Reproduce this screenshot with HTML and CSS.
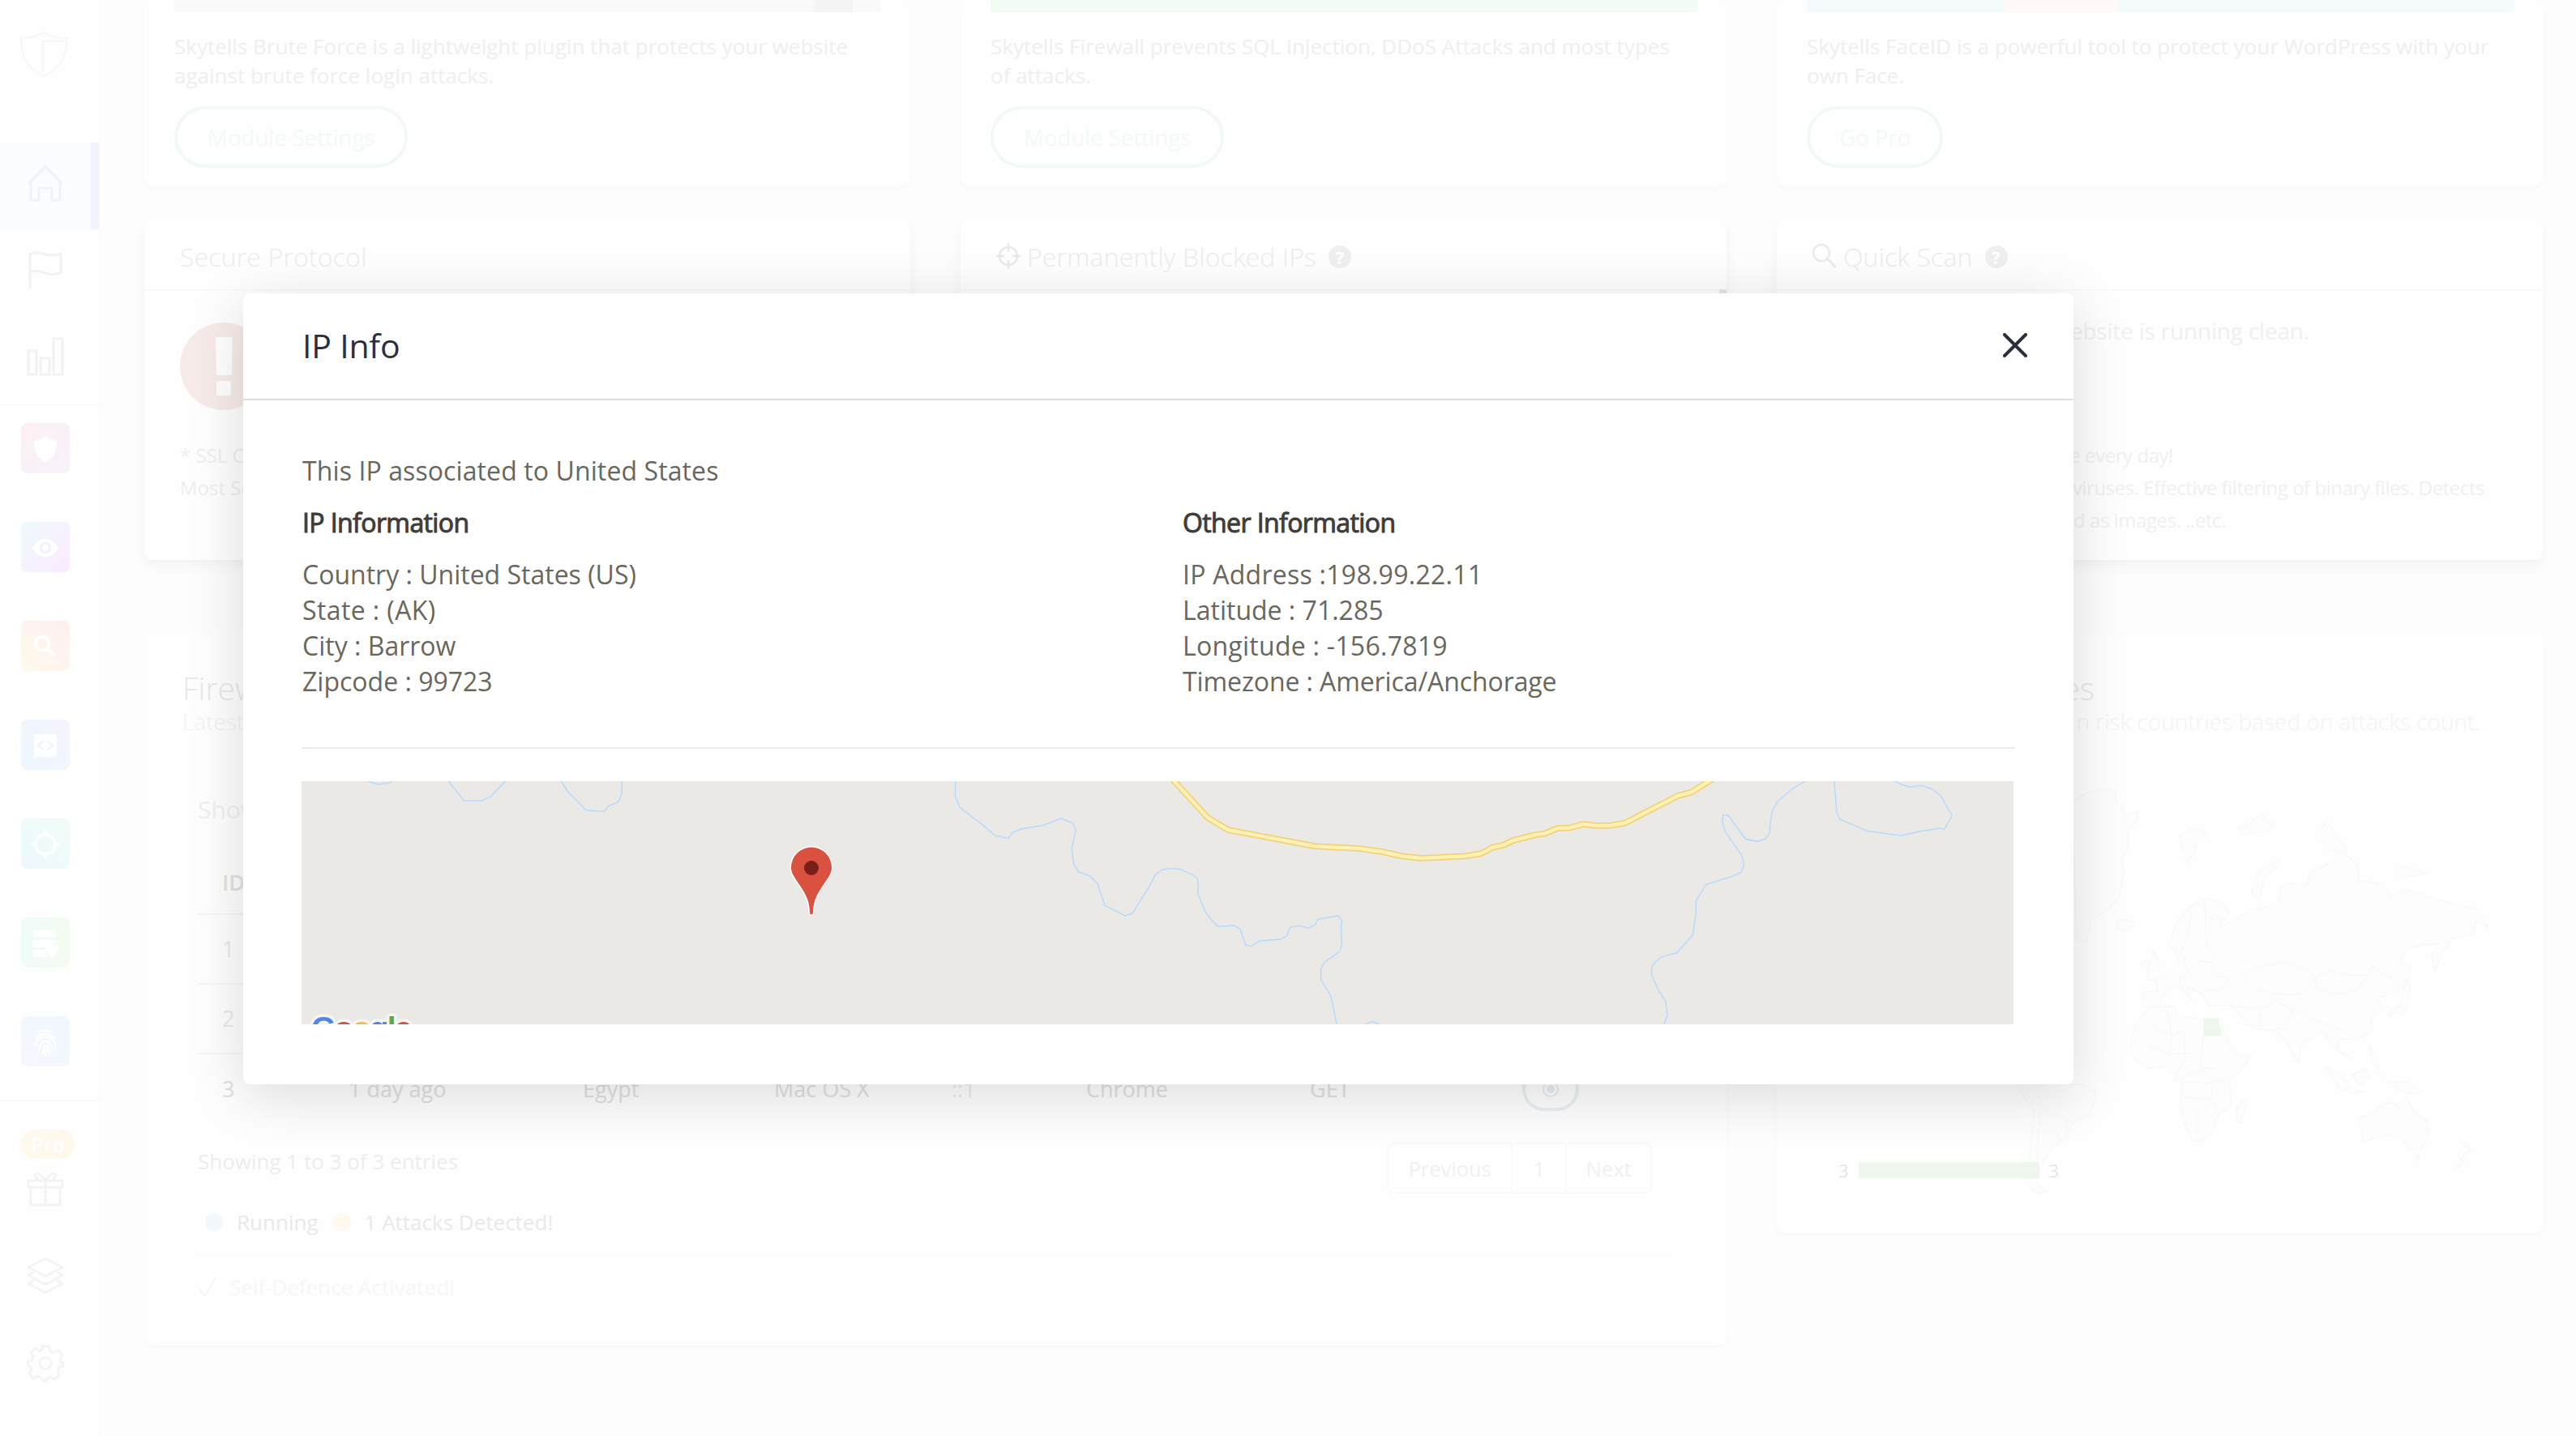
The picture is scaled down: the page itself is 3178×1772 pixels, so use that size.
FILE: index.html
```
<!DOCTYPE html>
<html lang="en">
<head>
<meta charset="utf-8">
<title>IP Info</title>
<link rel="stylesheet" href="styles.css">
</head>
<body>
<div class="app">
  <nav class="sidebar">
    <div class="brand">
      <svg width="60" height="58" viewBox="0 0 60 58" fill="none" stroke="#f3f8f9" stroke-width="2"><path d="M30 2C22 8 12 9 2 9c-1 22 8 38 28 47C50 47 59 31 58 9 48 9 38 8 30 2z"/><path d="M29 50V13h27"/></svg>
    </div>
    <div class="nav-item active">
      <svg width="46" height="46" viewBox="0 0 46 46" fill="none" stroke="#f0f1fc" stroke-width="3" stroke-linejoin="round"><path d="M2 24 23 2l21 22M5 21v23h10V29h16v15h10V21"/></svg>
    </div>
    <div class="nav-item">
      <svg width="46" height="48" viewBox="0 0 46 48" fill="none" stroke="#f2f2f2" stroke-width="3"><path d="M4 47V5c12-7 22 6 38-1v23c-16 8-24-6-38 0"/></svg>
    </div>
    <div class="nav-item">
      <svg width="46" height="48" viewBox="0 0 46 48" fill="none" stroke="#f2f2f2" stroke-width="3" stroke-linejoin="round"><path d="M2 17h10v29H2zM17 26h11v20H17zM33 2h11v44H33z"/></svg>
    </div>
    <div class="tiles">
      <div class="tile t1"><svg viewBox="0 0 60 62" fill="#fff"><path d="M30 16c5 4 9 5 14 6 1 12-4 21-14 27-10-6-15-15-14-27 5-1 9-2 14-6z"/></svg></div>
      <div class="tile t2"><svg viewBox="0 0 60 62"><path fill="#fff" d="M14 32c7-15 25-15 32 0-7 15-25 15-32 0z"/><circle cx="30" cy="32" r="5.500" fill="#fff" stroke="#f2f2fe" stroke-width="3.500"/></svg></div>
      <div class="tile t3"><svg viewBox="0 0 60 62" fill="none" stroke="#fff" stroke-width="4"><circle cx="26" cy="28" r="8.500"/><path d="m32 34 9 9"/></svg></div>
      <div class="tile t4"><svg viewBox="0 0 60 62"><rect x="16" y="18" width="28" height="28" rx="2" fill="#fff"/><path d="m27 26-6 6 6 6m6-12 6 6-6 6" fill="none" stroke="#f0f6fe" stroke-width="3"/></svg></div>
      <div class="tile t5"><svg viewBox="0 0 60 62" fill="none" stroke="#fff" stroke-width="3.500"><circle cx="30" cy="32" r="12"/><path d="M30 15v6m0 22v6M13 32h6m22 0h6"/></svg></div>
      <div class="tile t6"><svg viewBox="0 0 60 62" fill="#fff"><path d="M15 16h28v8H15zM15 28h28v3c-7 1-10 3-12 6H15zM15 40h15c0 4 1 7 3 9H15z"/><path d="m38 33 8 3c0 7-3 11-8 14-5-3-8-7-8-14z"/></svg></div>
      <div class="tile t7"><svg viewBox="0 0 60 62" fill="none" stroke="#fff" stroke-width="2.300" stroke-linecap="round"><path d="M21 20q9-5 18 0M18 27q12-11 24 0M18 36c0-14 24-14 24 0v3M22 42c3-5 0-10 7-11 8-1 8 6 9 12M26 46c4-5 1-10 5-10 4 1 1 6 4 10M31 41l-1 7"/></svg></div>
    </div>
    <div class="nav-foot">
      <span class="pro">Pro</span>
      <svg width="46" height="44" viewBox="0 0 46 44" fill="none" stroke="#f3f3f3" stroke-width="3"><path d="M2 12h42v8H2zM5 20h36v22H5zM23 12v30M23 11C12-2 6 4 14 11M23 11C34-2 40 4 32 11"/></svg>
      <svg class="layers" width="46" height="48" viewBox="0 0 46 48" fill="none" stroke="#f4f4f4" stroke-width="3" stroke-linejoin="round"><path d="M23 3 44 14 23 25 2 14zM8 20l-6 4 21 11 21-11-6-4M8 30l-6 4 21 11 21-11-6-4"/></svg>
      <svg class="gear" width="46" height="46" viewBox="0 0 46 46" fill="none" stroke="#f4f4f4" stroke-width="3" stroke-linejoin="round"><circle cx="23" cy="23" r="7"/><path d="M19 2h8l2 6 4 2 6-3 5 6-3 5 1 4 3 1v3l-5 2-2 4 2 6-6 5-5-3-4 2-1 3h-4l-2-4-4-2-6 3-5-6 3-5-2-4-3-1v-4l5-2 2-4-3-6 6-5 5 3 4-2z"/></svg>
    </div>
  </nav>

  <main class="board">
    <section class="card module">
      <div class="banner grey"></div>
      <p>Skytells Brute Force is a lightweight plugin that protects your website<br>against brute force login attacks.</p>
      <span class="btn wide">Module Settings</span>
    </section>
    <section class="card module">
      <div class="banner green"></div>
      <p>Skytells Firewall prevents SQL Injection, DDoS Attacks and most types<br>of attacks.</p>
      <span class="btn wide">Module Settings</span>
    </section>
    <section class="card module">
      <div class="banner blue"></div>
      <p>Skytells FaceID is a powerful tool to protect your WordPress with your<br>own Face.</p>
      <span class="btn small">Go Pro</span>
    </section>

    <section class="card panel">
      <header>Secure Protocol</header>
      <svg class="alert" width="108" height="108" viewBox="0 0 108 108"><circle cx="54" cy="54" r="54" fill="#f7ebe9"/><path d="M44 20q0-2 2-2h17q2 0 2 2l-1 43q0 2-2 2H47q-2 0-2-2zM45 74q0-2 2-2h14q2 0 2 2v14q0 2-2 2H47q-2 0-2-2z" fill="#fff"/></svg>
      <div class="notes"><p>* SSL C</p><p>Most Se</p></div>
    </section>
    <section class="card panel">
      <header>
        <svg class="ic" width="32" height="34" viewBox="0 0 32 34" fill="none" stroke="#e9e9e9" stroke-width="2.500"><circle cx="15" cy="16" r="11"/><path d="M15 0v11m0 10v11M0 16h10m10 0h10"/></svg>
        Permanently Blocked IPs <i class="help">?</i>
      </header>
      <div class="nub"></div>
    </section>
    <section class="card panel">
      <header>
        <svg class="ic" width="32" height="34" viewBox="0 0 32 34" fill="none" stroke="#ebebeb" stroke-width="2.500"><circle cx="11" cy="12" r="10"/><path d="m18 19 11 11" stroke-width="3"/></svg>
        Quick Scan <i class="help">?</i>
      </header>
      <p class="tail scan">website is running clean.</p>
      <p class="tail l1">e every day!</p>
      <p class="tail l2">viruses. Effective filtering of binary files. Detects</p>
      <p class="tail l3">d as images. ..etc.</p>
    </section>

    <section class="card firewall">
      <h2>Firew</h2>
      <h3>Latest</h3>
      <div class="log">
        <p class="show">Show</p>
        <div class="row head"><span>ID</span></div>
        <div class="row"><span>1</span></div>
        <div class="row"><span>2</span></div>
        <div class="row last">
          <span>3</span><span>1 day ago</span><span>Egypt</span><span>Mac OS X</span><span class="ip">::1</span><span>Chrome</span><span>GET</span>
          <span class="eye"><svg width="24" height="24" viewBox="0 0 24 24"><circle cx="12" cy="12" r="9" fill="none" stroke="#e6edf1" stroke-width="2"/><circle cx="12" cy="12" r="5" fill="#e6edf1"/></svg></span>
        </div>
        <div class="foot">
          <p>Showing 1 to 3 of 3 entries</p>
          <div class="pager"><span class="prev">Previous</span><span class="num">1</span><span class="next">Next</span></div>
        </div>
        <p class="status"><i class="dot cyan"></i><span class="run">Running</span><i class="dot amber"></i><span>1 Attacks Detected!</span></p>
        <p class="defence"><svg width="24" height="26" viewBox="0 0 24 26" fill="none" stroke="#f6f6f6" stroke-width="2"><path d="m2 16 7 8L22 1"/></svg>Self-Defence Activated!</p>
      </div>
    </section>

    <section class="card countries">
      <h2>es</h2>
      <h3>n risk countries based on attacks count.</h3>
      <svg class="world" viewBox="500 460 950 940" preserveAspectRatio="none" fill="#fdfdfd" stroke="#f9f9f9" stroke-width="2.500" stroke-linejoin="round">
        <path d="M620 500l25-20 30-12 30 6-5 20 14 14 6 20 26-8-4 20-16 26 0 40-12 20 4 30-8 60-24 30-30 20-8 50-18 2z"/>
        <path d="M704 770l16-4 20 6-8 14-16 6-10-10z"/>
        <path d="M822 574l20-14 26 2 4 14-16 10-6 30-12 20-10-30zM932 556l20-6 26-26 8 20 16 4-14 16-26 4-20 4zM958 705l14-50 38-24 2 8-28 30-12 50zM1086 570l14-32 14 30 24 36-6 16-30-12zM1232 650l20-6 34 16-20 6-30 2z"/>
        <path d="M764 880l10-46 8 24 10 40-30 6zM750 862l14-6 0 16-12 6z"/>
        <path d="M802 826 816 776 842 736 874 716 904 728 918 752 902 772 890 752 884 762 904 782 932 762 952 746 990 735 1008 728 1014 688 1040 682 1062 690 1070 656 1110 634 1128 610 1140 622 1158 640 1160 676 1204 684 1218 712 1248 696 1310 722 1350 732 1385 742 1404 784 1380 768 1376 800 1336 808 1318 840 1303 884 1298 850 1310 820 1280 824 1252 830 1238 862 1258 868 1252 910 1226 932 1196 944 1206 966 1184 984 1186 1020 1160 1036 1124 1038 1118 1060 1146 1080 1128 1072 1110 1052 1090 1020 1052 1050 1046 1092 1024 1044 1004 1018 960 1014 938 986 920 960 878 962 866 934 838 920 846 948 820 918 790 936 784 964 754 964 754 930 782 928 778 902 808 880 822 858 814 834z"/>
        <path d="M858 860l30 4-4 26 30 10-10 24-40 4M940 890l46-20 30-8 50 20 12 12-20 40-40 2-50-10zM1078 896l26-14 40 10 34 0-20 30-40 14-40-16zM1178 890l10-20 20 20 26 18M924 962l50 6 0 40-30-4M976 968l30-18 30 24-12 34-26 10M1040 970l30 20 60 30M830 850l10 40-20 10 10 30M846 750l-10 60-16 40M870 724l4 100 20 30" fill="none"/>
        <path d="M766 966 812 962 822 984 868 992 900 990 916 1050 934 1074 958 1074 938 1110 918 1134 920 1188 894 1212 886 1246 868 1268 848 1270 836 1240 824 1190 828 1146 816 1116 790 1100 764 1104 740 1086 730 1058 738 1006z"/>
        <path d="M766 1000l40 30 40-20M800 975l10 60-6 40M738 1040l60 30 50 0M832 1024v60l-20 50 60-30M868 1031l-6 70 40 6M828 1134l60 4 30-14M830 1170l56 4 10 44M856 1190v60M888 1130l-10 60" fill="none"/>
        <path d="M932 1224l-4-26 18-26 4 10-12 46zM1098 1100l30 20 14 30 30 6-20 4-30-10zM1148 1120l24-16 10 16-20 24zM1180 1050l10 20 10 40-14-20zM1210 1134l40 0 30 24-30 4zM1216 978l20-16 14-60 8 20-10 50-30 12z"/>
        <path d="M1170 1272 1160 1218 1190 1202 1206 1184 1222 1180 1236 1194 1248 1166 1266 1206 1288 1222 1292 1256 1276 1292 1254 1284 1240 1264 1216 1256 1190 1262zM1266 1300l8-2-2 16zM1344 1328l14-30 14-14-16 36-10 12zM1352 1270l8 14 8-2z"/>
        <path d="M516 1140h120l30 16-2 24-10 30-30 16-20 40-24 24-18 40-10 30 22 24-20 4-16-20 4-80 8-90-16-20z"/>
        <path d="M552 1160l20 40 40 20 0 50M560 1200l-6 140M590 1240l10 30" fill="none"/>
        <path d="M868 990h28l8 40h-36z" fill="#eff6ed" stroke="none"/>
      </svg>
      <div class="legend"><span>3</span><i></i><span>3</span></div>
    </section>
  </main>
</div>

<div class="modal">
  <header class="modal-head">
    <h1>IP Info</h1>
    <svg width="30" height="30" viewBox="0 0 30 30" stroke="#2c2e3e" stroke-width="4" stroke-linecap="round"><path d="m2 2 26 26M28 2 2 28"/></svg>
  </header>
  <div class="modal-body">
    <p class="lead">This IP associated to United States</p>
    <div class="cols">
      <div>
        <h4>IP Information</h4>
        <p class="a">Country : United States (US)</p>
        <p class="d">State : (AK)</p>
        <p class="a">City : Barrow</p>
        <p class="a">Zipcode : 99723</p>
      </div>
      <div>
        <h4>Other Information</h4>
        <p class="b">IP Address :198.99.22.11</p>
        <p class="a">Latitude : 71.285</p>
        <p class="b">Longitude : -156.7819</p>
        <p class="c">Timezone : America/Anchorage</p>
      </div>
    </div>
    <hr>
    <svg class="map" width="2112" height="300" viewBox="372 964 2112 300">
      <rect x="372" y="964" width="2112" height="300" fill="#eae9e5"/>
      <g fill="none" stroke="#b3d9ff" stroke-width="1.400" stroke-linejoin="round">
        <g transform="translate(360 940) scale(.63776 .33333)">
          <path vector-effect="non-scaling-stroke" d="M148 72l6 5 15 7 22-7 3-5M303 72l30 72 34 1 16-14 30-59M521 72l13 39 36 69 34 4 9-21 16-12 5-12 4-20 1-47"/>
        </g>
        <g transform="translate(1160 950) scale(.33333)">
          <path vector-effect="non-scaling-stroke" d="M57 40 55 97 72 139 158 204 202 243 252 253 268 231 300 219 382 205 446 180 490 196 502 223 487 287 493 348 512 378 553 392 582 421 609 502 684 540 711 532 778 424 795 389 822 369 854 365 889 368 935 389 952 402 955 430 953 459 980 523 994 544 1027 580 1089 576 1111 591 1131 650 1151 653 1181 633 1263 627 1282 614 1295 583 1328 577 1363 586 1389 571 1396 553 1473 540 1487 557 1483 580 1486 645 1480 670 1422 713 1409 736 1409 777 1445 836 1468 944"/>
        </g>
        <g transform="translate(1660 950) scale(.33333)">
          <path vector-effect="non-scaling-stroke" d="M72 943 97 931 130 944M1178 944 1191 909 1185 858 1158 815 1133 759 1133 731 1146 711 1174 691 1225 678 1285 612 1297 530 1297 485 1334 425 1428 395 1465 379 1475 349 1466 316 1406 230 1395 194 1397 167 1416 168 1481 257 1527 265 1556 254"/>
        </g>
        <g transform="translate(2150 720) scale(.65561 .54209)">
          <path vector-effect="non-scaling-stroke" d="M-1 572 7 583 29 587 43 581 51 567 52 544 56 517 67 495 96 465 119 449M172 449 177 522 183 537 233 563 298 574 334 564 373 557 379 560 394 529 373 484 358 469 338 460 315 463 298 458 284 449"/>
        </g>
      </g>
      <g fill="none" stroke-linejoin="round">
        <path d="M1443 957 1448.700 964 1490 1009 1515 1024 1622 1044.300 1677 1047 1705 1051 1730 1056.500 1754 1059 1807 1056.500 1826 1053.500 1834 1050 1840 1046 1854 1043 1867 1037 1895 1030 1906 1028.500 1922 1022 1937 1021.500 1953 1017 1971 1019 1988 1018.500 2005 1015.500 2070 982 2087 977.500 2108 964 2116 959" stroke="#f1cf70" stroke-width="7.500"/>
        <path d="M1443 957 1448.700 964 1490 1009 1515 1024 1622 1044.300 1677 1047 1705 1051 1730 1056.500 1754 1059 1807 1056.500 1826 1053.500 1834 1050 1840 1046 1854 1043 1867 1037 1895 1030 1906 1028.500 1922 1022 1937 1021.500 1953 1017 1971 1019 1988 1018.500 2005 1015.500 2070 982 2087 977.500 2108 964 2116 959" stroke="#fff0b3" stroke-width="4.500"/>
      </g>
      <path d="M1001 1128.500c-1.500 0-2-1-2-4-1-17-7-24-17-39-4-6-6-10-6-15a25 25 0 0 1 50 0c0 5-2 9-6 15-10 15-16 22-17 39 0 3-.5 4-2 4z" fill="#da5140" stroke="#fff" stroke-width="3" paint-order="stroke"/>
      <circle cx="1001" cy="1071" r="9" fill="#7a1f18"/>
      <text class="glogo" x="384" y="1282"><tspan fill="#4f86ec">G</tspan><tspan fill="#d95040">o</tspan><tspan fill="#f2bd42">o</tspan><tspan fill="#4f86ec">g</tspan><tspan fill="#58a65c">l</tspan><tspan fill="#d95040">e</tspan></text>
    </svg>
  </div>
</div>
</body>
</html>
```
FILE: styles.css
```
* { box-sizing: border-box; }
html, body { margin: 0; height: 100%; overflow: hidden; }
body {
  position: relative;
  background: #fdfdfd;
  font-family: "Open Sans", "Noto Sans", sans-serif;
  font-variant-ligatures: none;
}
p, h1, h2, h3, h4 { margin: 0; font-weight: 400; white-space: nowrap; }
svg { display: block; flex: none; }

.app { display: flex; height: 1772px; }

/* sidebar */
.sidebar {
  width: 124px;
  flex: none;
  background: #fefefe;
  border-right: 2px solid #fbfbfb;
}
.brand { height: 176px; padding: 38px 0 0 24px; }
.nav-item { height: 107px; display: flex; align-items: center; padding: 0 0 8px 33px; }
.nav-item.active { background: #fbfcff; border-right: 10px solid #eff4ff; }
.tiles {
  margin-top: 2px;
  padding: 21px 0 41px 26px;
  border-top: 2px solid #f9f9f9;
  border-bottom: 2px solid #f9f9f9;
  display: flex;
  flex-direction: column;
  gap: 60px;
}
.tile { width: 60px; height: 62px; border-radius: 8px; }
.tile svg { width: 60px; height: 62px; }
.t1 { background: linear-gradient(135deg, #fdf0f3, #f7f2fb); }
.t2 { background: linear-gradient(135deg, #eefafd, #fceaff); }
.t3 { background: linear-gradient(45deg, #fff9ea, #fdf0f0); }
.t4 { background: linear-gradient(45deg, #edf7ff, #f5f3fe); }
.t5 { background: linear-gradient(45deg, #edf8fe, #f1fcf8); }
.t6 { background: linear-gradient(90deg, #f0fcf8, #f4fbf1); }
.t7 { background: linear-gradient(45deg, #f8f6fe, #eff8fe); }
.nav-foot { padding: 35px 0 0 33px; }
.pro {
  display: block;
  width: 66px;
  height: 36px;
  margin: 0 0 15px -7px;
  border-radius: 18px;
  background: #fff8ec;
  color: #fff;
  font-size: 25px;
  font-weight: 600;
  line-height: 36px;
  text-align: center;
}
.layers { margin-top: 61px; }
.gear { margin-top: 61px; }

/* dashboard grid */
.board {
  flex: 1;
  display: grid;
  grid-template-columns: repeat(3, 945px);
  grid-template-rows: 229px 420px 879px;
  column-gap: 62px;
  padding-left: 54px;
}
.card {
  background: #fefefe;
  border-radius: 10px;
  box-shadow: 0 3px 10px rgba(0, 0, 0, .018);
}

.module { padding: 0 36px 0 37px; }
.banner { height: 15px; }
.grey { background: linear-gradient(90deg, #fafafa 90%, #f4f4f4 91%, #f4f4f4 96%, #fafafa 96%); }
.green { background: #f2fbf4; }
.blue { background: linear-gradient(90deg, #f5fafd 28%, #fffaf8 28%, #fffaf8 44%, #f5fafd 44%); }
.module p {
  margin-top: 24px;
  font-size: 26px;
  line-height: 36px;
  color: #efefef;
}
.btn {
  display: block;
  margin-top: 20px;
  height: 76px;
  border: 4px solid #f2f8fa;
  border-radius: 38px;
  color: #f3f9fa;
  font-size: 28px;
  line-height: 68px;
  letter-spacing: -.25px;
  text-align: center;
}
.wide { width: 288px; }
.small { width: 168px; }

.panel { height: 420px; margin-top: 42px; box-shadow: 0 7px 16px rgba(0, 0, 0, .045); }
.panel header {
  height: 88px;
  padding: 6px 44px 0;
  display: flex;
  align-items: center;
  color: #ececec;
  border-bottom: 2px solid #fafafa;
  font-size: 32px;
  font-weight: 300;
  line-height: 80px;
  letter-spacing: .15px;
}
.ic { margin-right: 6px; }
.help {
  width: 28px;
  height: 28px;
  margin-left: 15px;
  border-radius: 50%;
  background: #efefef;
  color: #fff;
  font: 700 22px/28px "Open Sans", sans-serif;
  text-align: center;
}
.alert { margin: 39px 0 0 44px; }
.notes { margin: 36px 0 0 44px; font-size: 24px; line-height: 40px; color: #eee; }
.nub { width: 9px; height: 6px; margin: -2px 0 0 auto; background: #e6e6e6; }
.tail { display: flex; justify-content: flex-end; color: #f0f0f0; font-size: 24px; line-height: 40px; letter-spacing: -.45px; }
.scan { width: 657px; margin-top: 29px; font-size: 28px; letter-spacing: -.2px; }
.l1 { width: 489px; margin-top: 114px; }
.l2 { width: 873px; }
.l3 { width: 554px; }

.firewall, .countries { height: 879px; margin-top: 132px; padding-top: 44px; }
.firewall { grid-column: span 2; margin-left: 2px; padding-left: 45px; }
.card h2 { font-size: 39px; line-height: 48px; font-weight: 300; color: #e8e8e8; }
.card h3 { font-size: 28px; line-height: 34px; font-weight: 300; color: #f2f2f2; }
.log { margin: 72px 66px 0 19px; color: #e9e9e9; }
.show { font-size: 30px; line-height: 40px; color: #f0f0f0; }
.row {
  display: grid;
  grid-template-columns: 156px 289px 236px 219px 166px 276px 262px 70px;
  align-items: center;
  padding-left: 30px;
  height: 86px;
  border-bottom: 2px solid #f6f6f6;
  font-size: 27px;
  line-height: 84px;
  white-space: nowrap;
}
.row.head { height: 70px; margin-top: 40px; padding-bottom: 9px; font-weight: 600; line-height: 59px; color: #e2e2e2; }
.row.last { border: 0; color: #e0e0e0; }
.ip { color: #e6edf0; }
.eye {
  height: 54px;
  border: 4px solid #e9f0f3;
  border-radius: 27px;
  display: flex;
  align-items: center;
  justify-content: center;
}
.foot { display: flex; justify-content: space-between; height: 63px; margin-top: 23px; font-size: 26px; }
.foot p { margin-top: 3px; line-height: 40px; color: #ededed; }
.pager {
  display: flex;
  margin-right: 26px;
  border: 2px solid #fafafa;
  border-radius: 8px;
  line-height: 60px;
  letter-spacing: -.3px;
  text-align: center;
  color: #f1f1f1;
}
.pager span + span { border-left: 2px solid #fafafa; }
.prev { width: 151px; }
.num { width: 67px; }
.next { width: 105px; }
.status { display: flex; align-items: center; margin-top: 15px; padding-left: 9px; line-height: 40px; font-size: 26px; }
.dot { width: 22px; height: 22px; border-radius: 50%; margin-right: 17px; }
.cyan { background: #f2f8fc; }
.amber { background: #fef8ef; }
.run { margin-right: 18px; }
.defence {
  display: flex;
  align-items: center;
  gap: 15px;
  margin-top: 20px;
  padding-top: 18px;
  border-top: 2px solid #fbfbfb;
  font-size: 26px;
  line-height: 40px;
  color: #f7f7f7;
}

.countries { height: 740px; }
.countries h2 { width: 392px; text-align: right; }
.countries h3 { width: 868px; text-align: right; font-size: 28px; color: #f3f3f3; }
.world { width: 623px; height: 510px; margin: 62px 0 0 285px; }
.legend {
  display: flex;
  align-items: center;
  gap: 12px;
  margin: -50px 0 0 76px;
  font-size: 22px;
  line-height: 30px;
  color: #e6e6e6;
}
.legend i { width: 223px; height: 20px; background: #eff6ed; }

/* dialog */
.modal {
  position: absolute;
  left: 300px;
  top: 362px;
  width: 2258px;
  height: 976px;
  border-radius: 8px;
  background: #fff;
  box-shadow: 0 14px 70px rgba(0, 0, 0, .14);
}
.modal-head {
  display: flex;
  align-items: center;
  justify-content: space-between;
  height: 132px;
  padding: 0 57px 2px 73px;
  border-bottom: 2px solid #dfdfdf;
}
.modal-head h1 { font-size: 41px; color: #2c2e3e; letter-spacing: -.2px; }
.modal-body {
  padding: 65px 72px 0;
  font-size: 32px;
  line-height: 44px;
  color: #69675d;
}
.modal-body p { padding-left: 1px; }
.modal-body .lead { letter-spacing: .1px; }
.modal-body .b { letter-spacing: .26px; }
.modal-body .c { letter-spacing: -.1px; }
.modal-body .d { letter-spacing: .4px; }
.cols { display: grid; grid-template-columns: 1086px 1fr; margin-top: 20px; }
.modal-body h4 {
  margin-bottom: 20px;
  padding-left: 1px;
  color: #3e3d38;
  letter-spacing: -.6px;
  -webkit-text-stroke: 1px #3e3d38;
}
hr { margin: 59px 0 40px; border: 0; height: 2px; background: #eeebe2; }
.map { overflow: hidden; }
.glogo {
  font: 700 39px "Liberation Sans", sans-serif;
  letter-spacing: -2px;
  paint-order: stroke;
  stroke: #f6f5f3;
  stroke-width: 7px;
  stroke-linejoin: round;
}
```
